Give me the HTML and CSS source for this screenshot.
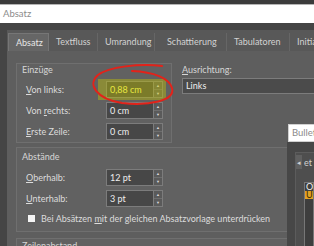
FILE: index.html
```html
<!DOCTYPE html>
<html lang="de">
<head>
    <meta charset="UTF-8">
    <meta name="viewport" content="width=device-width, initial-scale=1.0">
    <title>Absatz</title>
    <link rel="stylesheet" href="styles.css">
</head>
<body>
  <div class="top-strip"></div>
  <div class="titlebar">Absatz</div>
  <div class="app">
    <div class="side-strip"></div>
    <div class="dialog">
      <div class="dialog-strip"></div>
      <div class="tabs">
        <div class="tab active">Absatz</div>
        <div class="tab">Textfluss</div>
        <div class="tab">Umrandung</div>
        <div class="tab">Schattierung</div>
        <div class="tab">Tabulatoren</div>
        <div class="tab">Initialen</div>
      </div>
      <div class="body">
        <div class="row-top">
          <div class="group indents">
            <div class="group-title">Einzüge</div>
            <div class="field marked">
              <span class="label"><u>V</u>on links:</span>
              <span class="input">0,88 cm</span>
              <span class="spin"><i>▲</i><i>▼</i></span>
              <span class="marker"></span>
            </div>
            <div class="field">
              <span class="label">Von <u>r</u>echts:</span>
              <span class="input">0 cm</span>
              <span class="spin"><i>▲</i><i>▼</i></span>
            </div>
            <div class="field">
              <span class="label"><u>E</u>rste Zeile:</span>
              <span class="input">0 cm</span>
              <span class="spin"><i>▲</i><i>▼</i></span>
            </div>
          </div>
          <div class="align">
            <div class="align-title"><u>A</u>usrichtung:</div>
            <div class="select">Links</div>
          </div>
        </div>
        <div class="group spacing">
          <div class="group-title">Abstände</div>
          <div class="field">
            <span class="label"><u>O</u>berhalb:</span>
            <span class="input">12 pt</span>
            <span class="spin"><i>▲</i><i>▼</i></span>
          </div>
          <div class="field">
            <span class="label"><u>U</u>nterhalb:</span>
            <span class="input">3 pt</span>
            <span class="spin"><i>▲</i><i>▼</i></span>
          </div>
          <div class="check">
            <span class="box"></span>
            <span>Bei Absätzen <u>m</u>it der gleichen Absatzvorlage unterdrücken</span>
          </div>
        </div>
        <div class="group linespace">
          <div class="group-title">Zeilenabstand</div>
        </div>
      </div>
    </div>
  </div>

  <!-- red hand-drawn circle -->
  <svg class="scribble" width="314" height="246" viewBox="0 0 314 246">
    <path d="M162 66 C140 63 108 67 98 75 C87 84 96 99 122 103 C148 106 176 101 172 88 C169 78 154 72 132 71"
          fill="none" stroke="#e2231a" stroke-width="2" stroke-linecap="round"/>
  </svg>

  <div class="float-win">
    <div class="float-title">Bulleti</div>
    <div class="float-body">
      <div class="float-inner">
        <div class="float-head"><span class="arrow">◂</span><span>et</span></div>
        <div class="list">
          <div class="item">Ol</div>
          <div class="item sel">Ul</div>
        </div>
      </div>
    </div>
  </div>
</body>
</html>
```

FILE: styles.css
```css
body {
  margin: 0;
  width: 314px;
  height: 246px;
  overflow: hidden;
  position: relative;
  background: #454545;
  font-family: Lato, "Open Sans", sans-serif;
  font-size: 9px;
  color: #dcdcdc;
}
u {
  text-decoration-thickness: 1px;
  text-underline-offset: 1px;
}
.top-strip {
  height: 4px;
  background: #3b3b3b;
}
.titlebar {
  height: 18px;
  border-top: 1px solid #b4b4b4;
  background: #fff;
  color: #8c8c8c;
  font-size: 9.5px;
  line-height: 18px;
  padding-left: 3px;
}
.app {
  display: flex;
  height: 223px;
  overflow: hidden;
}
.side-strip {
  width: 7px;
  flex: none;
  background: #454545;
}
.dialog {
  flex: none;
  width: 330px;
  display: flex;
  flex-direction: column;
}
.dialog > div {
  flex: none;
}
.dialog-strip {
  height: 7px;
  background: #454545;
}
.tabs {
  height: 21px;
  display: flex;
  align-items: flex-end;
  background: #585858;
  padding-left: 1px;
  box-sizing: border-box;
}
.tab {
  height: 18px;
  line-height: 17px;
  box-sizing: border-box;
  border-right: 1px solid #666;
  padding: 0 7px;
  color: #d2d2d2;
}
.tab.active {
  width: 41px;
  background: #666;
  border: 1px solid #767676;
  border-bottom: none;
  color: #e6e6e6;
}
.tab:nth-child(2) { width: 49px; }
.tab:nth-child(3) { width: 57px; }
.tab:nth-child(4) { width: 72px; padding-left: 12px; }
.tab:nth-child(5) { width: 63px; }
.body {
  background: #5e5e5e;
  padding: 12px 0 0 9px;
  height: 200px;
}
.row-top {
  display: flex;
  gap: 10px;
}
.group {
  border: 1px solid #6f6f6f;
  background: #616161;
  box-sizing: border-box;
}
.group-title {
  line-height: 11px;
  padding-left: 5px;
  color: #d6d6d6;
}
.indents {
  width: 156px;
  height: 80px;
  padding-bottom: 5px;
  display: flex;
  flex-direction: column;
  gap: 4px;
}
.indents .group-title {
  margin-bottom: 2px;
}
.field {
  position: relative;
  display: flex;
  align-items: center;
  height: 17px;
  padding-left: 9px;
}
.label {
  width: 80px;
}
.input {
  width: 48px;
  height: 17px;
  box-sizing: border-box;
  border: 1px solid #7c7c7c;
  background: #474747;
  padding-left: 3px;
  line-height: 15px;
  color: #eee;
}
.spin {
  width: 9px;
  height: 17px;
  display: flex;
  flex-direction: column;
  box-sizing: border-box;
  border: 1px solid #7c7c7c;
  border-left: none;
  background: #5a5a5a;
}
.spin i {
  flex: 1;
  font-style: normal;
  font-size: 4px;
  line-height: 7px;
  text-align: center;
  color: #d8d8d8;
}
.spin i + i {
  border-top: 1px solid #6e6e6e;
}
.marker {
  position: absolute;
  left: 81px;
  top: -2px;
  width: 68px;
  height: 21px;
  background: rgba(195, 195, 0, 0.42);
}
.marked .input {
  color: #ffff70;
}
.align {
  flex: 1;
  padding-top: 1px;
}
.align-title {
  line-height: 11px;
  color: #d6d6d6;
}
.select {
  margin-top: 3px;
  height: 16px;
  box-sizing: border-box;
  border: 1px solid #7c7c7c;
  background: #4b4b4b;
  padding-left: 3px;
  line-height: 14px;
  color: #eee;
}
.spacing {
  margin-top: 4px;
  width: 320px;
  height: 85px;
  padding-top: 3px;
  display: flex;
  flex-direction: column;
  gap: 4px;
}
.spacing .group-title {
  margin-bottom: 3px;
}
.check {
  display: flex;
  align-items: center;
  gap: 6px;
  margin-top: 2px;
  padding-left: 11px;
  line-height: 11px;
}
.box {
  width: 7px;
  height: 7px;
  background: #f4f4f4;
}
.linespace {
  margin-top: 6px;
  width: 320px;
  height: 30px;
  padding-top: 1px;
}
.scribble {
  position: absolute;
  left: 0;
  top: 0;
  pointer-events: none;
}
.float-win {
  position: absolute;
  left: 287px;
  top: 124px;
  width: 27px;
  overflow: hidden;
}
.float-title {
  height: 16px;
  margin-left: 1px;
  background: #fff;
  border: 1px solid #d0d0d0;
  border-right: none;
  color: #8a8a8a;
  font-size: 9.5px;
  line-height: 15px;
  padding-left: 3px;
  white-space: nowrap;
  overflow: hidden;
}
.float-body {
  height: 106px;
  background: #474747;
  padding: 10px 0 0 8px;
}
.float-inner {
  height: 96px;
  background: #4e4e4e;
  border-left: 1px solid #5c5c5c;
  border-top: 1px solid #5c5c5c;
}
.float-head {
  display: flex;
  align-items: center;
  height: 18px;
  gap: 2px;
  color: #d0d0d0;
  white-space: nowrap;
}
.arrow {
  width: 6px;
  height: 14px;
  background: #606060;
  font-size: 7px;
  line-height: 14px;
  text-align: center;
}
.list {
  margin: 11px 0 0 8px;
  height: 70px;
  border: 1px solid #777;
  background: #3e3e3e;
  overflow: hidden;
}
.item {
  height: 8px;
  line-height: 8px;
  font-size: 9px;
  padding-left: 1px;
  color: #f0f0f0;
}
.item.sel {
  background: #e3a225;
  color: #3a2a00;
}
```
